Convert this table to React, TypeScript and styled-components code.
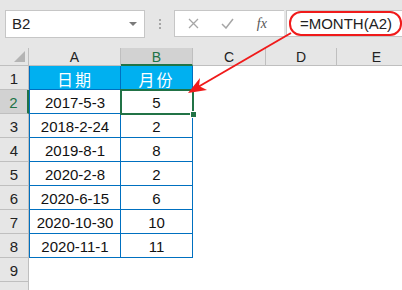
import React from 'react';
import styled, { createGlobalStyle, css } from 'styled-components';

const GlobalStyle = createGlobalStyle`
  html, body {
    margin: 0;
    padding: 0;
    background: #ffffff;
  }
  * {
    box-sizing: border-box;
  }
`;

// 色
const GREEN = '#217346';
const BLUE_LINE = '#0070c0';
const HEAD_BLUE = '#00b0f0';
const HEAD_GRAY = '#e6e6e6';
const HEAD_LINE = '#bfbfbf';

const FONT = `"Liberation Sans", Arial, "Noto Sans CJK SC", sans-serif`;

interface Row {
  date: string;
  month: string;
}

const rows: Row[] = [
  { date: '2017-5-3', month: '5' },
  { date: '2018-2-24', month: '2' },
  { date: '2019-8-1', month: '8' },
  { date: '2020-2-8', month: '2' },
  { date: '2020-6-15', month: '6' },
  { date: '2020-10-30', month: '10' },
  { date: '2020-11-1', month: '11' },
];

const columns = ['A', 'B', 'C', 'D', 'E'];

const Window = styled.div`
  position: relative;
  width: 402px;
  height: 290px;
  overflow: hidden;
  background: #ffffff;
  font-family: ${FONT};
`;

// 名称框 + 编辑栏
const Toolbar = styled.div`
  display: flex;
  align-items: center;
  height: 48px;
  padding: 10px 0 11px 5px;
  background: ${HEAD_GRAY};
`;

const NameBox = styled.div`
  display: flex;
  align-items: center;
  justify-content: space-between;
  width: 142px;
  height: 28px;
  padding: 0 7px 0 6px;
  background: #ffffff;
  border: 1px solid #c6c6c6;
  font-size: 15px;
  color: #222222;
`;

const Caret = styled.span`
  width: 0;
  height: 0;
  border-left: 4px solid transparent;
  border-right: 4px solid transparent;
  border-top: 4px solid #7a7a7a;
`;

const Grip = styled.div`
  display: flex;
  flex-direction: column;
  gap: 2px;
  margin: 0 13px 0 14px;
  span {
    width: 2px;
    height: 2px;
    background: #a6a6a6;
  }
`;

const FormulaTools = styled.div`
  display: flex;
  align-items: center;
  width: 111px;
  height: 27px;
  background: #ffffff;
  border: 1px solid #c6c6c6;
  border-right: none;
`;

const ToolIcon = styled.span`
  display: flex;
  justify-content: center;
  width: 34px;
  padding-left: 3px;
  color: #a6a6a6;
`;

const Fx = styled.span`
  width: 34px;
  padding-left: 3px;
  text-align: center;
  font-family: "Liberation Serif", "Times New Roman", serif;
  font-style: italic;
  font-size: 14px;
  color: #555555;
`;

const FormulaInput = styled.div`
  flex: 1;
  display: flex;
  align-items: center;
  height: 27px;
  margin-left: 2px;
  padding-left: 2px;
  background: #ffffff;
  border: 1px solid #c6c6c6;
  border-right: none;
`;

const Formula = styled.span`
  display: inline-flex;
  align-items: center;
  height: 25px;
  padding: 0 8px 0 9px;
  border: 2px solid #f01a1a;
  border-radius: 12px;
  font-size: 15px;
  color: #222222;
`;

// 表格区域，第 10 行在窗口底部只露出一截
const Sheet = styled.div`
  display: grid;
  grid-template-columns: 29px 92px 72px 73px 71px 80px;
  grid-template-rows: 18px repeat(9, 24px) 44px;
`;

const Corner = styled.div`
  position: relative;
  background: ${HEAD_GRAY};
  border-right: 1px solid ${HEAD_LINE};
  border-bottom: 1px solid ${HEAD_LINE};
  &::after {
    content: '';
    position: absolute;
    right: 3px;
    bottom: 3px;
    width: 0;
    height: 0;
    border-left: 11px solid transparent;
    border-bottom: 11px solid #b4b4b4;
  }
`;

const ColHead = styled.div<{ $active?: boolean }>`
  display: flex;
  align-items: center;
  justify-content: center;
  background: ${(p) => (p.$active ? '#d2d2d2' : HEAD_GRAY)};
  border-right: 1px solid ${HEAD_LINE};
  border-bottom: ${(p) => (p.$active ? `2px solid ${GREEN}` : `1px solid ${HEAD_LINE}`)};
  font-size: 14px;
  padding-top: ${(p) => (p.$active ? '1px' : '0')};
  color: ${(p) => (p.$active ? GREEN : '#222222')};
`;

const RowHead = styled.div<{ $active?: boolean }>`
  display: flex;
  align-items: center;
  justify-content: center;
  padding-top: 2px;
  background: ${(p) => (p.$active ? '#d2d2d2' : HEAD_GRAY)};
  border-right: ${(p) => (p.$active ? `2px solid ${GREEN}` : `1px solid ${HEAD_LINE}`)};
  border-bottom: 1px solid ${HEAD_LINE};
  font-size: 15px;
  color: ${(p) => (p.$active ? GREEN : '#222222')};
`;

const Cell = styled.div<{ $head?: boolean; $boxed?: boolean; $first?: boolean; $selected?: boolean }>`
  position: relative;
  display: flex;
  align-items: center;
  justify-content: center;
  padding-top: 2px;
  font-size: 15px;
  color: #111111;
  white-space: nowrap;
  ${(p) =>
    p.$boxed &&
    css`
      border-right: 1px solid ${BLUE_LINE};
      border-bottom: 1px solid ${BLUE_LINE};
      ${p.$first && `border-left: 1px solid ${BLUE_LINE};`}
    `}
  ${(p) =>
    p.$head &&
    css`
      background: ${HEAD_BLUE};
      color: #ffffff;
      font-size: 16px;
      letter-spacing: 2px;
    `}
  ${(p) =>
    p.$selected &&
    css`
      z-index: 1;
      outline: 2px solid ${GREEN};
      outline-offset: -1px;
    `}
`;

// 填充柄
const FillHandle = styled.span`
  position: absolute;
  right: -5px;
  bottom: -5px;
  width: 7px;
  height: 7px;
  background: ${GREEN};
  border: 1px solid #ffffff;
`;

const Arrow = styled.svg`
  position: absolute;
  left: 0;
  top: 0;
  pointer-events: none;
  z-index: 5;
`;

const CrossIcon = () => (
  <svg width="11" height="11" viewBox="0 0 11 11">
    <path d="M1 1 L10 10 M10 1 L1 10" stroke="currentColor" strokeWidth="1.3" fill="none" />
  </svg>
);

const CheckIcon = () => (
  <svg width="13" height="11" viewBox="0 0 13 11">
    <path d="M1 6 L5 10 L12 1" stroke="currentColor" strokeWidth="1.5" fill="none" />
  </svg>
);

const blanks = ['C', 'D', 'E'];

const App: React.FC = () => {
  const emptyRows = [9, 10];

  return (
    <Window>
      <GlobalStyle />
      <Toolbar>
        <NameBox>
          B2
          <Caret />
        </NameBox>
        <Grip>
          <span />
          <span />
          <span />
        </Grip>
        <FormulaTools>
          <ToolIcon>
            <CrossIcon />
          </ToolIcon>
          <ToolIcon>
            <CheckIcon />
          </ToolIcon>
          <Fx>fx</Fx>
        </FormulaTools>
        <FormulaInput>
          <Formula>=MONTH(A2)</Formula>
        </FormulaInput>
      </Toolbar>

      <Sheet>
        <Corner />
        {columns.map((c) => (
          <ColHead key={c} $active={c === 'B'}>
            {c}
          </ColHead>
        ))}

        <RowHead>1</RowHead>
        <Cell $boxed $first $head>日期</Cell>
        <Cell $boxed $head>月份</Cell>
        {blanks.map((b) => (
          <Cell key={b} />
        ))}

        {rows.map((r, i) => (
          <React.Fragment key={r.date}>
            <RowHead $active={i === 0}>{i + 2}</RowHead>
            <Cell $boxed $first>
              {r.date}
            </Cell>
            <Cell $boxed $selected={i === 0}>
              {r.month}
              {i === 0 && <FillHandle />}
            </Cell>
            {blanks.map((b) => (
              <Cell key={b} />
            ))}
          </React.Fragment>
        ))}

        {emptyRows.map((n) => (
          <React.Fragment key={n}>
            <RowHead>{n}</RowHead>
            <Cell />
            <Cell />
            {blanks.map((b) => (
              <Cell key={b} />
            ))}
          </React.Fragment>
        ))}
      </Sheet>

      <Arrow width="402" height="290" viewBox="0 0 402 290">
        <line x1="291" y1="33" x2="198" y2="87" stroke="#f01a1a" strokeWidth="2" />
        <polygon points="188,93 200,78 199,86 207,90" fill="#f01a1a" />
      </Arrow>
    </Window>
  );
};

export default App;
